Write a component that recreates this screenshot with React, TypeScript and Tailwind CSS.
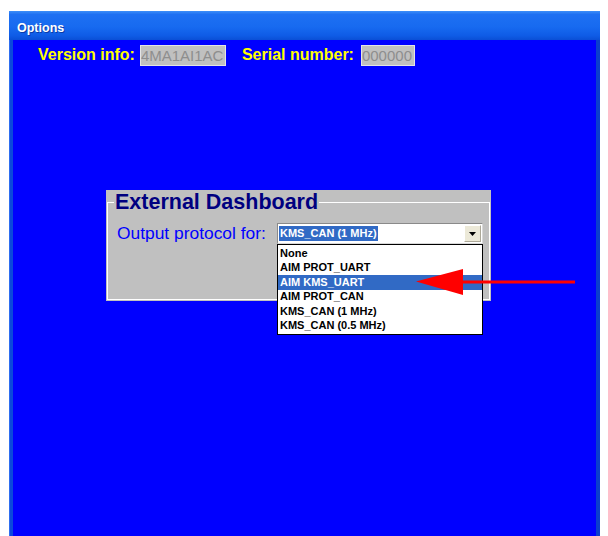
import React from "react";

const items = [
  "None",
  "AIM PROT_UART",
  "AIM KMS_UART",
  "AIM PROT_CAN",
  "KMS_CAN (1 MHz)",
  "KMS_CAN (0.5 MHz)",
];

function ComboBox() {
  return (
    <div className="relative w-[206px] h-[21px] bg-white border border-t-[#8a8a8a] border-l-[#8a8a8a] border-r-[#d8d8d8] border-b-[#d8d8d8] flex items-center">
      <div className="ml-[1px] h-[15px] px-[1px] flex items-center bg-[#316ac5] text-white text-[11px] font-bold leading-none">
        KMS_CAN (1 MHz)
      </div>
      <div className="ml-auto mr-[1px] w-[17px] h-[17px] bg-[#ece9d8] border border-t-white border-l-white border-r-[#aca899] border-b-[#aca899] flex items-center justify-center">
        <svg width="7" height="4" viewBox="0 0 7 4">
          <polygon points="0,0 7,0 3.5,4" fill="#000" />
        </svg>
      </div>
      {/* open drop-down list */}
      <div className="absolute left-[-1px] top-[20px] w-[206px] bg-white border border-black pt-[1px] pb-[1px] z-10">
        {items.map((it) => (
          <div
            key={it}
            className={
              "h-[14.5px] pl-[2px] flex items-center text-[11px] font-bold leading-none " +
              (it === "AIM KMS_UART" ? "bg-[#316ac5] text-white" : "text-black")
            }
          >
            {it}
          </div>
        ))}
      </div>
    </div>
  );
}

export default function App() {
  return (
    <div
      className="relative w-[608px] h-[536px] bg-white overflow-hidden pt-[11px] pl-[9px]"
      style={{ fontFamily: '"Liberation Sans", Arial, sans-serif' }}
    >
      <div className="w-[591px] h-[525px] flex flex-col">
        {/* title bar */}
        <div className="h-[29px] flex items-center pl-[8px] pt-[5px] bg-[linear-gradient(to_bottom,#3d8ef8_0%,#1e70f2_12%,#176af0_55%,#0f5ce6_85%,#0a4fd6_100%)]">
          <span className="text-white font-bold text-[12.5px] leading-none [text-shadow:1px_1px_0_#0a3ca8]">
            Options
          </span>
        </div>
        {/* window body */}
        <div className="flex-1 flex flex-row">
          <div className="w-[1px] bg-[#2e6ef0]" />
          <div className="w-[3px] bg-[#0b48dc]" />
          <div className="flex-1 bg-[#0000ff] flex flex-col pt-[4px] pl-[25px]">
            <div className="h-[22px] flex items-center">
              <span className="text-[16px] font-bold text-[#ffff00] leading-none">Version info:</span>
              <div className="ml-[5px] w-[86px] h-[21px] bg-[#c0c0c0] border border-[#e4e4e4] flex items-center overflow-hidden">
                <span className="text-[15px] text-[#8e8e8e] leading-none">4MA1AI1AC</span>
              </div>
              <span className="ml-[16px] text-[16px] font-bold text-[#ffff00] leading-none">Serial number:</span>
              <div className="ml-[7px] w-[54px] h-[21px] bg-[#c0c0c0] border border-[#e4e4e4] flex items-center overflow-hidden">
                <span className="text-[15px] text-[#8e8e8e] leading-none">000000</span>
              </div>
            </div>

            {/* external dashboard group */}
            <div className="ml-[68px] mt-[124px] w-[385px] h-[111px] bg-[#c0c0c0] px-[1px]">
              <fieldset className="h-[110px] border border-white">
                <legend className="ml-[6px] px-[1px] text-[21.5px] font-bold text-[#000080] leading-[24px]">
                  External Dashboard
                </legend>
                <div className="mt-[9px] pl-[9px] flex items-center">
                  <span className="w-[160px] text-[17.4px] text-[#0000ff] leading-none">
                    Output protocol for:
                  </span>
                  <ComboBox />
                </div>
              </fieldset>
            </div>
          </div>
          <div className="w-[4px] bg-[#0b3fcc]" />
        </div>
      </div>

      {/* red pointer arrow */}
      <svg
        className="absolute left-[414px] top-[266px] z-20"
        width="164"
        height="32"
        viewBox="0 0 164 32"
      >
        <rect x="48" y="14.5" width="113" height="3" fill="#ff0000" />
        <polygon points="2,15.5 49,3 49,29" fill="#ff0000" />
      </svg>
    </div>
  );
}
